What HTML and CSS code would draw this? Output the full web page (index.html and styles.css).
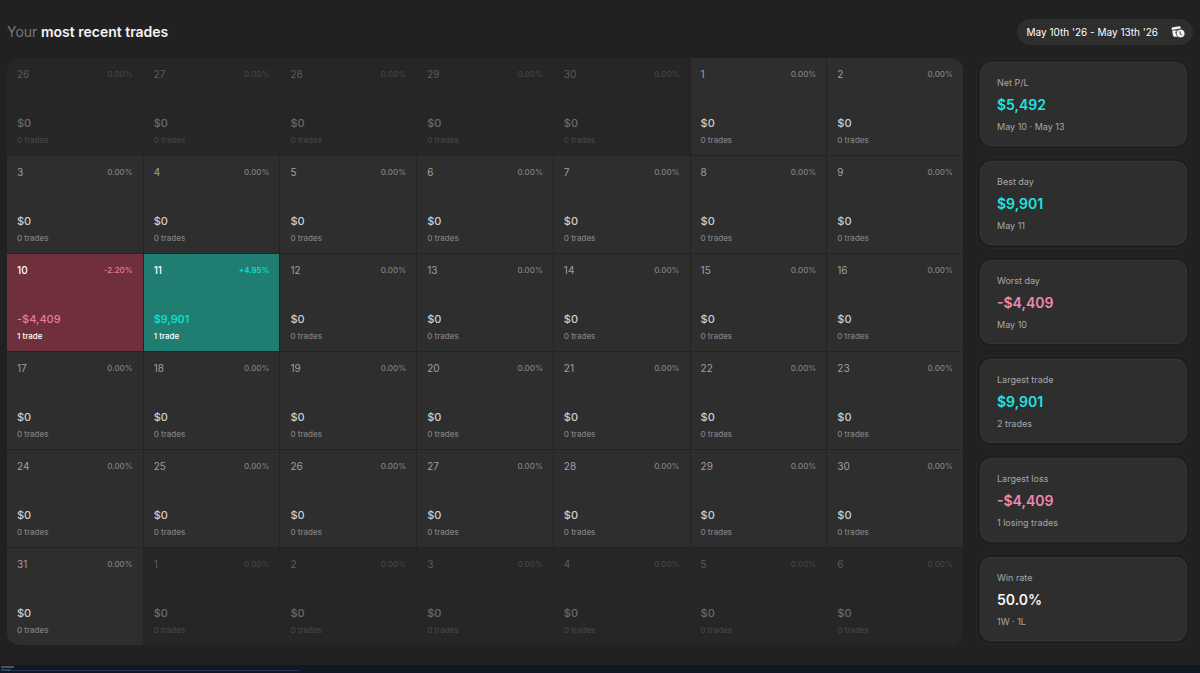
FILE: index.html
```html
<!DOCTYPE html>
<html lang="en">
<head>
<meta charset="utf-8">
<meta name="viewport" content="width=device-width, initial-scale=1">
<title>Most recent trades</title>
<link rel="stylesheet" href="styles.css">
</head>
<body>
<main class="page">
  <header class="header">
    <h1 class="title"><span class="title-soft">Your</span> most recent trades</h1>
    <button class="range" type="button">
      May 10th '26 - May 13th '26
      <svg class="range-icon" viewBox="0 0 24 24" aria-hidden="true">
        <path d="M1 6.500Q1 4.500 3 4L14 2Q16 1.800 16.500 3.500L17 6 1.500 8.500z" fill="#f2f2f2"/>
        <path d="M2 9.500H18V20H6Q3.500 20 3.300 17.500z" fill="#f2f2f2"/>
        <path d="M7 12.500h3v3" stroke="#2e2e2e" stroke-width="1.400" fill="none"/>
        <circle cx="16.500" cy="14.500" r="7.400" fill="#f2f2f2" stroke="#2e2e2e" stroke-width="1.200"/>
        <path d="M15.500 11V15L18.500 17" stroke="#2e2e2e" stroke-width="1.600" fill="none"/>
      </svg>
    </button>
  </header>
  <div class="content">
    <ol class="calendar" id="calendar"></ol>
    <aside class="stats">
      <section class="stat"><div class="stat-card"><h2 class="stat-label">Net P/L</h2><p class="stat-value gain">$5,492</p><p class="stat-note">May 10 · May 13</p></div></section>
      <section class="stat"><div class="stat-card"><h2 class="stat-label">Best day</h2><p class="stat-value gain">$9,901</p><p class="stat-note">May 11</p></div></section>
      <section class="stat"><div class="stat-card"><h2 class="stat-label">Worst day</h2><p class="stat-value loss">-$4,409</p><p class="stat-note">May 10</p></div></section>
      <section class="stat"><div class="stat-card"><h2 class="stat-label">Largest trade</h2><p class="stat-value gain">$9,901</p><p class="stat-note">2 trades</p></div></section>
      <section class="stat"><div class="stat-card"><h2 class="stat-label">Largest loss</h2><p class="stat-value loss">-$4,409</p><p class="stat-note">1 losing trades</p></div></section>
      <section class="stat"><div class="stat-card"><h2 class="stat-label">Win rate</h2><p class="stat-value">50.0%</p><p class="stat-note">1W · 1L</p></div></section>
    </aside>
  </div>
</main>
<footer class="strip" aria-hidden="true">
  <div class="strip-head"></div>
  <div class="strip-line"><span class="strip-key"></span><span class="strip-rule"></span></div>
</footer>
<script src="calendar.js"></script>
</body>
</html>
```
FILE: styles.css
```css
* { box-sizing: border-box; }

body {
  margin: 0;
  min-height: 100vh;
  display: flex;
  flex-direction: column;
  background: #212121;
  color: #f5f5f5;
  font-family: Inter, "Liberation Sans", sans-serif;
}

h1, h2, p, ol { margin: 0; padding: 0; font-weight: 400; }

.page {
  flex: 1;
  display: flex;
  flex-direction: column;
  padding: 19px 7px 20px;
}

.header {
  display: flex;
  align-items: center;
  justify-content: space-between;
  margin-bottom: 13px;
}

.title { font-size: 14px; line-height: 20px; font-weight: 600; }
.title-soft { color: #777; font-weight: 400; }

.range {
  display: flex;
  align-items: center;
  gap: 13px;
  height: 26px;
  padding: 0 8px 0 10px;
  border: 0;
  border-radius: 13px;
  background: #2e2e2e;
  color: #fff;
  font: 400 10px/16px Inter, "Liberation Sans", sans-serif;
}
.range-icon { width: 14px; height: 14px; }

.content { flex: 1; display: flex; gap: 13px; }

.calendar {
  flex: 1;
  display: grid;
  grid-template-columns: repeat(7, 1fr);
  grid-auto-rows: 1fr;
  gap: 1px;
  list-style: none;
  border-radius: 12px;
  overflow: hidden;
  background: #242424;
}

.day {
  display: grid;
  grid-template-columns: 1fr auto;
  grid-template-rows: 1fr auto auto;
  row-gap: 3px;
  padding: 9px 10px 8px;
  background: #2e2e2e;
  font-size: 8px;
  font-weight: 500;
  line-height: 14px;
  color: #808080;
}
.day-number { font-size: 10px; font-weight: 400; color: #a0a0a0; }
.day-amount { grid-column: 1 / -1; font-size: 11px; color: #cfcfcf; }
.day-count { grid-column: 1 / -1; }

.day.outside { background: #262626; color: #444; }
.outside .day-number { color: #5c5c5c; }
.outside .day-amount { color: #6a6a6a; }

.day.down { background: #6f2f3b; color: #fff; }
.day.up { background: #1f7d71; color: #fff; }
.down .day-number, .up .day-number { color: #fff; font-weight: 500; }
.down .day-percent, .down .day-amount { color: #e87ba3; }
.up .day-percent, .up .day-amount { color: #0be8d8; }

.stats {
  width: 215px;
  display: flex;
  flex-direction: column;
  gap: 7px;
  margin-right: 2px;
}
.stat {
  flex: 1;
  display: flex;
  padding: 3px;
  border-radius: 14px;
  border: 1px solid #272727;
  background: #1f1f1f;
}
.stat-card {
  flex: 1;
  display: flex;
  flex-direction: column;
  justify-content: center;
  gap: 5px;
  padding: 1px 16px 0;
  border: 1px solid #363636;
  border-radius: 11px;
  background: #2e2e2e;
}
.stat-label, .stat-note { font-size: 9px; line-height: 14px; color: #a8a8a8; }
.stat-value { font-size: 14px; line-height: 20px; font-weight: 600; }
.gain { color: #1de6e2; }
.loss { color: #f087ae; }

.strip {
  height: 8px;
  padding: 1px;
  display: flex;
  flex-direction: column;
  gap: 1px;
  background: #101826;
}
.strip-head { width: 13px; height: 2px; background: #4b5462; }
.strip-line { display: flex; align-items: center; gap: 1px; }
.strip-key { width: 10px; height: 2px; background: #2c4568; }
.strip-rule { width: 24%; height: 1px; background: #263549; }
```
FILE: calendar.js
```js
const calendar = document.getElementById("calendar");
const trades = {
  10: { state: "down", percent: "-2.20%", amount: "-$4,409", count: "1 trade" },
  11: { state: "up", percent: "+4.95%", amount: "$9,901", count: "1 trade" }
};
const empty = { state: "", percent: "0.00%", amount: "$0", count: "0 trades" };

// The calendar labels run 26–30, then 1–31, then 1–6.
function addDay(number, info) {
  const day = document.createElement("li");
  day.className = ("day " + info.state).trim();
  for (const [name, text] of [["number", number], ["percent", info.percent], ["amount", info.amount], ["count", info.count]]) {
    const part = document.createElement("span");
    part.className = "day-" + name;
    part.textContent = text;
    day.append(part);
  }
  calendar.append(day);
}

const outside = { ...empty, state: "outside" };
for (let n = 26; n <= 30; n++) addDay(n, outside);
for (let n = 1; n <= 31; n++) addDay(n, trades[n] || empty);
for (let n = 1; n <= 6; n++) addDay(n, outside);
```
